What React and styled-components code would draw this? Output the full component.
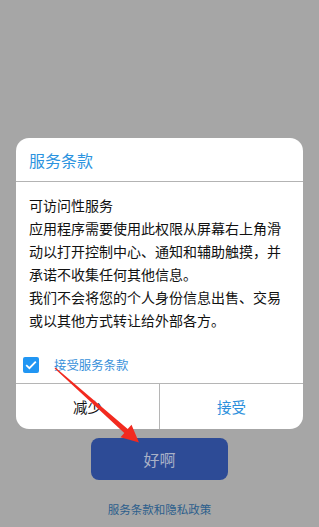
import styled, { createGlobalStyle } from "styled-components";

const GlobalStyle = createGlobalStyle`
  html, body {
    margin: 0;
    padding: 0;
    background: #a6a6a6;
  }
  body {
    font-family: "Noto Sans CJK SC", "Noto Sans", sans-serif;
  }
`;

const Screen = styled.div`
  position: relative;
  width: 319px;
  height: 527px;
  background: #a6a6a6;
  display: flex;
  flex-direction: column;
  align-items: center;
  padding-top: 138px;
  box-sizing: border-box;
  overflow: hidden;
`;

const Dialog = styled.div`
  width: 287px;
  background: #fff;
  border-radius: 13px;
  overflow: hidden;
  display: flex;
  flex-direction: column;
`;

const Header = styled.div`
  height: 43px;
  border-bottom: 1px solid #b3b3b3;
  display: flex;
  align-items: center;
  padding: 0 13px;
  font-size: 16px;
  color: #2b93e0;
`;

const Body = styled.div`
  height: 201px;
  display: flex;
  flex-direction: column;
  justify-content: space-between;
`;

const Text = styled.p`
  margin: 0;
  padding: 12px 13px 0;
  font-size: 14px;
  line-height: 23px;
  color: #111;
`;

const CheckRow = styled.label`
  display: flex;
  align-items: center;
  gap: 15px;
  padding: 0 0 9px 7px;
  font-size: 12.4px;
  color: #3790da;
`;

const Box = styled.span`
  width: 16px;
  height: 16px;
  border-radius: 2px;
  background: #2196f3;
  display: flex;
  align-items: center;
  justify-content: center;
`;

const Footer = styled.div`
  display: flex;
  border-top: 1px solid #b5b5b5;
  height: 45px;
`;

const FooterButton = styled.div`
  flex: 1;
  display: flex;
  align-items: center;
  justify-content: center;
  font-size: 14.5px;
  color: ${(p) => (p.$primary ? "#2b8fdc" : "#111")};
  & + & {
    border-left: 1px solid #b5b5b5;
  }
`;

const OkButton = styled.div`
  margin-top: 9px;
  width: 137px;
  height: 42px;
  border-radius: 8px;
  background: #2d4b96;
  color: #a9b1c7;
  font-size: 16px;
  display: flex;
  align-items: center;
  justify-content: center;
`;

const PolicyLink = styled.div`
  margin-top: 21px;
  font-size: 11.5px;
  color: #2c5e8c;
`;

const Arrow = styled.svg`
  position: absolute;
  left: 0;
  top: 0;
  pointer-events: none;
`;

export default function App() {
  return (
    <>
      <GlobalStyle />
      <Screen>
        <Dialog>
          <Header>服务条款</Header>
          <Body>
            <Text>
              可访问性服务
              <br />
              应用程序需要使用此权限从屏幕右上角滑动以打开控制中心、通知和辅助触摸，并承诺不收集任何其他信息。
              <br />
              我们不会将您的个人身份信息出售、交易或以其他方式转让给外部各方。
            </Text>
            <CheckRow>
              <Box>
                <svg width="12" height="10" viewBox="0 0 12 10">
                  <path d="M1.2 5.2 L4.4 8.2 L10.8 1.6" fill="none" stroke="#fff" strokeWidth="1.8" />
                </svg>
              </Box>
              接受服务条款
            </CheckRow>
          </Body>
          <Footer>
            <FooterButton>减少</FooterButton>
            <FooterButton $primary>接受</FooterButton>
          </Footer>
        </Dialog>
        <OkButton>好啊</OkButton>
        <PolicyLink>服务条款和隐私政策</PolicyLink>
        <Arrow width="319" height="527" viewBox="0 0 319 527">
          <polygon
            points="54.6,368.4 55.4,367.6 127.7,429.1 131.5,424.8 139,442.5 120.5,437.2 124.3,432.9"
            fill="#f22a1f"
          />
        </Arrow>
      </Screen>
    </>
  );
}
